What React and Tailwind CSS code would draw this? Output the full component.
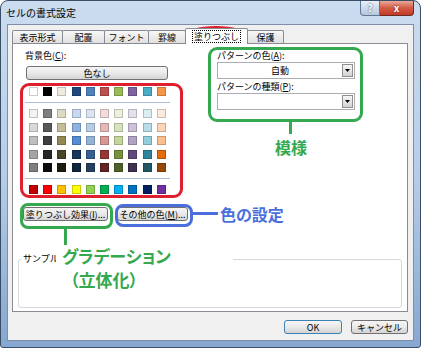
const THEME = ["#FFFFFF", "#000000", "#EEECE1", "#1F497D", "#4F81BD", "#C0504D", "#9BBB59", "#8064A2", "#4BACC6", "#F79646"];
const SHADES = [
  ["#F2F2F2", "#7F7F7F", "#DDD9C3", "#C6D9F0", "#DBE5F1", "#F2DCDB", "#EBF1DD", "#E5E0EC", "#DBEEF3", "#FDEADA"],
  ["#D8D8D8", "#595959", "#C4BD97", "#8DB3E2", "#B8CCE4", "#E5B9B7", "#D7E3BC", "#CCC1D9", "#B7DDE8", "#FBD5B5"],
  ["#BFBFBF", "#3F3F3F", "#938953", "#548DD4", "#95B3D7", "#D99694", "#C3D69B", "#B2A2C7", "#92CDDC", "#FAC08F"],
  ["#A5A5A5", "#262626", "#494429", "#17365D", "#366092", "#953734", "#76923C", "#5F497A", "#31859B", "#E36C09"],
  ["#7F7F7F", "#0C0C0C", "#1D1B10", "#0F243E", "#244061", "#632423", "#4F6128", "#3F3151", "#205867", "#974806"],
];
const STANDARD = ["#C00000", "#FF0000", "#FFC000", "#FFFF00", "#92D050", "#00B050", "#00B0F0", "#0070C0", "#002060", "#7030A0"];

const TABS = [
  { label: "表示形式", w: "w-[51px]" },
  { label: "配置", w: "w-[43px]" },
  { label: "フォント", w: "w-[45px]" },
  { label: "罫線", w: "w-[38px]" },
  { label: "塗りつぶし", w: "w-[63px]", active: true },
  { label: "保護", w: "w-[37px]" },
];

const SwatchRow = ({ colors }) => (
  <div className="grid grid-cols-10 w-[142px] ml-[4px]">
    {colors.map((c, i) => (
      <span
        key={i}
        className="block w-[9px] h-[9px] border border-black/20"
        style={{ backgroundColor: c }}
      />
    ))}
  </div>
);

const Btn = ({ className, children }) => (
  <div
    className={
      "flex items-center justify-center rounded-[3px] border border-[#707070] bg-linear-to-b from-[#f6f6f6] via-[#e9e9e9] to-[#d4d4d4] text-[9px] leading-none " +
      className
    }
  >
    {children}
  </div>
);

const Select = ({ value }) => (
  <div className="flex items-center h-[17px] w-[138px] border border-[#abadb3] bg-white">
    <span className="flex-1 text-center text-[9px] leading-none">{value}</span>
    <span className="flex items-center justify-center w-[11px] h-[13px] mr-[1px] border border-[#8f8f8f] bg-linear-to-b from-[#f7f7f7] to-[#d2d2d2]">
      <svg width="5" height="3" viewBox="0 0 5 3">
        <path d="M0 0h5L2.5 3z" fill="#000" />
      </svg>
    </span>
  </div>
);

export default function App() {
  return (
    <div className="relative w-[421px] h-[348px] font-['Noto_Sans_CJK_JP',sans-serif] text-black">
      {/* window frame */}
      <div className="flex flex-col w-full h-full border border-[#3a4d66] rounded-t-[8px] rounded-b-[3px] bg-linear-to-b from-[#cbdcef] via-[#b7cde7] to-[#86a7cf]">
        {/* title bar */}
        <div className="flex items-start justify-between h-[23px] pr-[6px]">
          <span className="pl-[5px] pt-[5px] text-[10px] leading-[13px]">セルの書式設定</span>
          <div className="flex">
            <div className="flex items-center justify-center w-[20px] h-[15px] rounded-bl-[4px] border border-t-0 border-[#5f7694] bg-linear-to-b from-[#e9f0f9] to-[#b5c7dc] text-[10px] font-bold leading-none text-white [text-shadow:0_0_2px_#2a3b55]">
              ?
            </div>
            <div className="flex items-center justify-center w-[34px] h-[15px] rounded-br-[4px] border border-t-0 border-l-0 border-[#6b2a22] bg-linear-to-b from-[#e7a799] via-[#d35a44] to-[#c23a25] text-[10px] font-bold leading-none text-white [text-shadow:0_0_2px_#5a1a10]">
              x
            </div>
          </div>
        </div>

        {/* client area */}
        <div className="flex flex-col mx-[6px] h-[317px] border border-[#7d8fa8] bg-[#f0f0f0] pl-[4px] pr-[5px] pt-[3px]">
          {/* tabs */}
          <div className="flex items-end h-[15px]">
            {TABS.map((t, i) => (
              <div
                key={t.label}
                className={
                  "flex items-center justify-center border border-b-0 border-[#898c95] rounded-t-[2px] text-[9px] leading-none " +
                  t.w +
                  (i > 0 ? " -ml-px" : "") +
                  (t.active
                    ? " relative z-10 h-[16px] -mb-px bg-white"
                    : " h-[13px] bg-linear-to-b from-[#f7f7f7] to-[#e0e0e0]")
                }
              >
                {t.active ? (
                  <span className="border border-dotted border-black px-[1px] py-[1px]">{t.label}</span>
                ) : (
                  t.label
                )}
              </div>
            ))}
          </div>

          {/* tab panel */}
          <div className="flex flex-col h-[269px] border border-[#898c95] bg-white px-[5px]">
            <div className="flex pl-[7px] pt-[6px]">
              {/* background colour */}
              <div className="flex flex-col w-[192px]">
                <span className="text-[9px] leading-[12px]">
                  背景色(<u>C</u>):
                </span>
                <Btn className="ml-[1px] mt-[4px] w-[142px] h-[14px]">色なし</Btn>
                <div className="mt-[7px]">
                  <SwatchRow colors={THEME} />
                </div>
                <div className="mt-[6px] w-[145px] h-px bg-[#a9bfdb]" />
                <div className="mt-[6px] flex flex-col gap-y-[4.5px]">
                  {SHADES.map((row, i) => (
                    <SwatchRow key={i} colors={row} />
                  ))}
                </div>
                <div className="mt-[6px] w-[145px] h-px bg-[#a9bfdb]" />
                <div className="mt-[6px]">
                  <SwatchRow colors={STANDARD} />
                </div>
                <div className="flex gap-[9px] -ml-[2px] mt-[13px]">
                  <Btn className="w-[85px] h-[14px]">
                    塗りつぶし効果(<u>I</u>)...
                  </Btn>
                  <Btn className="w-[71px] h-[14px]">
                    その他の色(<u>M</u>)...
                  </Btn>
                </div>
              </div>

              {/* pattern */}
              <div className="flex flex-col">
                <span className="text-[9px] leading-[12px]">
                  パターンの色(<u>A</u>):
                </span>
                <Select value="自動" />
                <span className="mt-[2px] text-[9px] leading-[12px]">
                  パターンの種類(<u>P</u>):
                </span>
                <Select value="" />
              </div>
            </div>

            {/* sample */}
            <fieldset className="mt-[32px] h-[55px] rounded-[3px] border border-[#d5d9de] pl-[2px]">
              <legend className="px-[2px] text-[9px] leading-[12px]">サンプル</legend>
            </fieldset>
          </div>

          {/* dialog buttons */}
          <div className="flex justify-end gap-[9px] mt-[8px]">
            <Btn className="w-[58px] h-[14px] !border-[#3c7fb1]">OK</Btn>
            <Btn className="w-[57px] h-[14px]">キャンセル</Btn>
          </div>
        </div>
      </div>

      {/* annotations */}
      <div className="absolute left-[185px] top-[26px] w-[62px] h-[18px] rounded-[50%] border-[3px] border-[#df1f2d]" />
      <div className="absolute left-[20px] top-[83px] w-[163px] h-[115px] rounded-[9px] border-[3px] border-[#df1f2d]" />

      <div className="absolute left-[208px] top-[47px] w-[155px] h-[75px] rounded-[9px] border-[3px] border-[#35a94f]" />
      <div className="absolute left-[289px] top-[122px] w-[3px] h-[12px] bg-[#35a94f]" />
      <div className="absolute left-[275px] top-[137px] text-[16px] leading-[20px] font-bold text-[#35a94f] [font-feature-settings:'palt']">
        模様
      </div>

      <div className="absolute left-[20px] top-[203px] w-[93px] h-[26px] rounded-[8px] border-[3px] border-[#35a94f]" />
      <div className="absolute left-[64px] top-[229px] w-[3px] h-[18px] bg-[#35a94f]" />
      <div className="absolute left-[56px] top-[245px] w-[177px] h-[46px] bg-white pl-[6px] text-[17px] leading-[22px] font-bold text-[#35a94f] [font-feature-settings:'palt']">
        <div>グラデーション</div>
        <div className="pl-[8px] mt-[2px]">（立体化）</div>
      </div>

      <div className="absolute left-[115px] top-[204px] w-[78px] h-[23px] rounded-[8px] border-[3px] border-[#4a6fdc]" />
      <div className="absolute left-[193px] top-[212px] w-[25px] h-[3px] bg-[#4a6fdc]" />
      <div className="absolute left-[220px] top-[204px] text-[16px] leading-[20px] font-bold text-[#4a6fdc] [font-feature-settings:'palt']">
        色の設定
      </div>
    </div>
  );
}
